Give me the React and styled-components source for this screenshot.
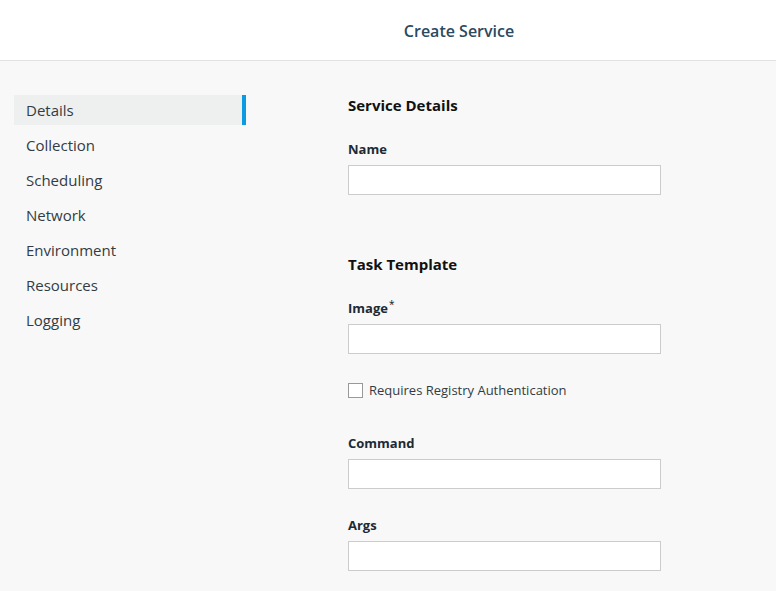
import React from 'react'
import styled, { createGlobalStyle } from 'styled-components'

const GlobalStyle = createGlobalStyle`
  html, body {
    margin: 0;
    padding: 0;
    background: #f8f8f8;
    font-family: "Open Sans", "Liberation Sans", sans-serif;
  }
`

const navItems = ['Details', 'Collection', 'Scheduling', 'Network', 'Environment', 'Resources', 'Logging']

const App = () => {
  return (
    <Page>
      <GlobalStyle />
      <Header>
        <Title>Create Service</Title>
      </Header>
      <Body>
        <Sidebar>
          {navItems.map((item, i) => (
            <NavItem key={item} active={i === 0}>{item}</NavItem>
          ))}
        </Sidebar>
        <Content>
          <SectionTitle>Service Details</SectionTitle>
          <Field top={26}>
            <Label>Name</Label>
            <Input />
          </Field>

          <SectionTitle spaced>Task Template</SectionTitle>
          <Field top={26}>
            <Label>Image<Req>*</Req></Label>
            <Input />
          </Field>
          <CheckRow>
            <Box type="checkbox" />
            <CheckLabel>Requires Registry Authentication</CheckLabel>
          </CheckRow>
          <Field top={35}>
            <Label>Command</Label>
            <Input />
          </Field>
          <Field top={28}>
            <Label>Args</Label>
            <Input />
          </Field>
        </Content>
      </Body>
    </Page>
  )
}

const Page = styled.div`
  min-height: 100vh;
  background: #f8f8f8;
`

const Header = styled.header`
  height: 61px;
  background: #fff;
  border-bottom: 1px solid #e2e2e2;
  display: flex;
  align-items: center;
  justify-content: center;
  padding-left: 142px;
  padding-top: 2px;
  box-sizing: border-box;
`

const Title = styled.h1`
  margin: 0;
  font-size: 16px;
  font-weight: 600;
  color: #2b4a5f;
`

const Body = styled.div`
  display: flex;
  padding-top: 34px;
`

const Sidebar = styled.nav`
  width: 232px;
  margin-left: 14px;
  display: flex;
  flex-direction: column;
  gap: 5px;
`

const NavItem = styled.div`
  height: 30px;
  line-height: 30px;
  padding-left: 12px;
  font-size: 15px;
  color: #333c44;
  background: ${p => (p.active ? '#eef0ef' : 'transparent')};
  border-right: 4px solid ${p => (p.active ? '#0a9be3' : 'transparent')};
`

const Content = styled.main`
  margin-left: 102px;
  width: 313px;
  display: flex;
  flex-direction: column;
`

const SectionTitle = styled.h2`
  margin: ${p => (p.spaced ? '59px' : '0')} 0 0;
  font-size: 15px;
  line-height: 20px;
  font-weight: 700;
  color: #111;
`

const Field = styled.div`
  margin-top: ${p => p.top || 25}px;
  display: flex;
  flex-direction: column;
  gap: 7px;
`

const Label = styled.label`
  font-size: 13px;
  line-height: 17px;
  font-weight: 700;
  color: #1d2a33;
`

const Req = styled.sup`
  font-size: 10px;
  font-weight: 400;
  color: #111;
  vertical-align: top;
  position: relative;
  top: -4px;
  margin-left: 1px;
`

const Input = styled.input`
  height: 30px;
  box-sizing: border-box;
  border: 1px solid #cccccc;
  background: #fff;
  outline: none;
  margin: 0;
`

const CheckRow = styled.div`
  margin-top: 26px;
  display: flex;
  align-items: center;
  gap: 6px;
  height: 20px;
`

const Box = styled.input`
  appearance: none;
  width: 15px;
  height: 15px;
  margin: 0;
  border: 1px solid #999;
  background: #fff;
  box-sizing: border-box;
`

const CheckLabel = styled.span`
  font-size: 13px;
  color: #333c44;
`

export default App
